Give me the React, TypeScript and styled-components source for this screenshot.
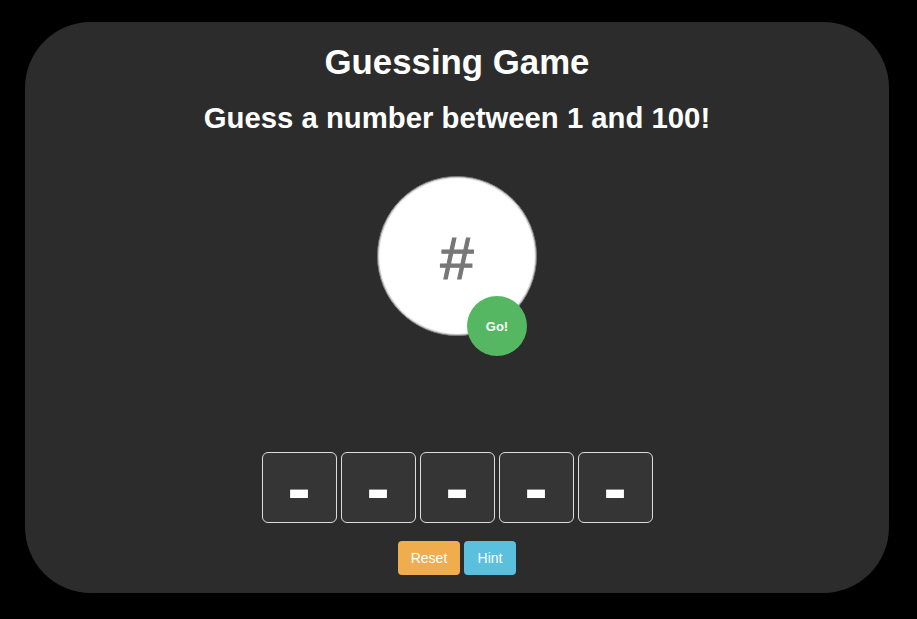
import React from "react";
import styled, { createGlobalStyle } from "styled-components";

const Global = createGlobalStyle`
  html, body { margin: 0; padding: 0; background: #000; }
  body { font-family: "Liberation Sans", Arial, Helvetica, sans-serif; }
  * { box-sizing: border-box; }
`;

const Page = styled.div`
  width: 917px;
  height: 619px;
  padding: 22px 28px 26px 25px;
  background: #000;
`;

const Card = styled.main`
  height: 100%;
  background: #2c2c2c;
  border-radius: 66px;
  display: flex;
  flex-direction: column;
  align-items: center;
  padding-top: 20px;
  color: #fff;
`;

const Title = styled.h1`
  margin: 0;
  font-size: 34.8px;
  line-height: 40px;
  font-weight: bold;
`;

const Subtitle = styled.h2`
  margin: 19px 0 0;
  font-size: 29.3px;
  line-height: 34px;
  font-weight: bold;
`;

const Dial = styled.div`
  position: relative;
  margin-top: 41px;
  width: 160px;
  height: 160px;
`;

const NumberCircle = styled.div`
  width: 160px;
  height: 160px;
  border-radius: 50%;
  background: #fff;
  border: 1px solid #7a7a7a;
  box-shadow: inset 0 0 1px 1px #c4c4c4;
  display: flex;
  align-items: center;
  justify-content: center;
  color: #777;
  font-size: 60px;
  line-height: 1;
  -webkit-text-stroke: 1.2px #777;
  padding-top: 5px;
`;

const GoButton = styled.button`
  position: absolute;
  left: 90px;
  top: 120px;
  width: 60px;
  height: 60px;
  border-radius: 50%;
  border: none;
  background: #55b762;
  color: #fff;
  font-family: inherit;
  font-size: 13px;
  font-weight: bold;
  padding: 0;
`;

const Slots = styled.div`
  margin-top: 116px;
  display: flex;
  gap: 4px;
`;

const Slot = styled.div`
  width: 75px;
  height: 71px;
  border: 1px solid #dcdcdc;
  border-radius: 6px;
  background: #353535;
  display: flex;
  align-items: center;
  justify-content: center;
  color: #fff;
  font-family: "DejaVu Sans", sans-serif;
  font-size: 58px;
  font-weight: bold;
  line-height: 1;
  padding-top: 6px;
`;

const Actions = styled.div`
  margin-top: 18px;
  display: flex;
  gap: 4px;
`;

const ActionButton = styled.button<{ $bg: string; $w: number }>`
  width: ${(p) => p.$w}px;
  height: 34px;
  border: none;
  border-radius: 4px;
  background: ${(p) => p.$bg};
  color: #fff;
  font-family: inherit;
  font-size: 14px;
  padding: 0;
`;

export default function App() {
  return (
    <Page>
      <Global />
      <Card>
        <Title>Guessing Game</Title>
        <Subtitle>Guess a number between 1 and 100!</Subtitle>
        <Dial>
          <NumberCircle>#</NumberCircle>
          <GoButton>Go!</GoButton>
        </Dial>
        <Slots>
          {[0, 1, 2, 3, 4].map((i) => (
            <Slot key={i}>-</Slot>
          ))}
        </Slots>
        <Actions>
          <ActionButton $bg="#f0ad4e" $w={62}>Reset</ActionButton>
          <ActionButton $bg="#5bc0de" $w={52}>Hint</ActionButton>
        </Actions>
      </Card>
    </Page>
  );
}
